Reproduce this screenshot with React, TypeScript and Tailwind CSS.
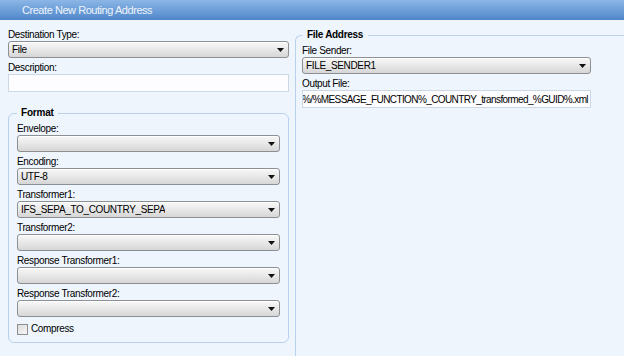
import React from 'react'

const FONT = "font-['Liberation_Sans',Arial,sans-serif]"

function Arrow() {
  return (
    <svg width="7" height="4" viewBox="0 0 7 4" className="shrink-0">
      <polygon points="0,0 7,0 3.5,4" fill="#111" />
    </svg>
  )
}

function Select({ value }: { value?: string }) {
  return (
    <div className="flex h-[17px] items-center justify-between rounded-[3px] border border-[#8c8f94] bg-gradient-to-b from-[#f8f8f8] via-[#e8e8e8] to-[#d6d6d6] pr-[4px] pl-[3px] shadow-[inset_0_1px_0_#ffffff]">
      <span className="truncate text-[10px] leading-[15px] tracking-[-0.35px] text-black">{value}</span>
      <Arrow />
    </div>
  )
}

function TextInput({ children, end }: { children?: React.ReactNode; end?: boolean }) {
  return (
    <div
      className={`flex h-[18px] items-center overflow-hidden border border-[#cdd8e6] bg-[#fdfcfe] px-[2px] ${end ? 'justify-end' : ''}`}
    >
      <span className="text-[10px] leading-[15px] tracking-[-0.6px] whitespace-nowrap text-black">{children}</span>
    </div>
  )
}

function Field({ label, children }: { label: string; children: React.ReactNode }) {
  return (
    <div className="flex flex-col">
      <label className="h-[12px] text-[10px] leading-[12px] tracking-[-0.35px] text-black">{label}</label>
      {children}
    </div>
  )
}

export default function App() {
  return (
    <div className={`flex h-[356px] w-[624px] flex-col overflow-hidden bg-[#eef5fd] ${FONT}`}>
      <div className="flex h-[20px] shrink-0 items-center bg-gradient-to-b from-[#8cb6e6] to-[#4f87ca] pl-[22px]">
        <span className="text-[11px] leading-[20px] tracking-[-0.45px] text-[#eef4fc]">Create New Routing Address</span>
      </div>

      <div className="flex flex-1 gap-[6px] pt-[9px] pl-[8px]">
        {/* left column */}
        <div className="flex w-[281px] shrink-0 flex-col">
          <div className="flex flex-col gap-[4px]">
            <Field label="Destination Type:">
              <Select value="File" />
            </Field>
            <Field label="Description:">
              <TextInput />
            </Field>
          </div>

          <fieldset className="mt-[15px] rounded-[6px] border border-[#b9d1ed] pt-[4px] pr-[8px] pb-[7px] pl-[8px]">
            <legend className="px-[4px] text-[10px] leading-[12px] font-bold tracking-[-0.2px] text-black">Format</legend>
            <div className="flex flex-col gap-[4px]">
              <Field label="Envelope:">
                <Select />
              </Field>
              <Field label="Encoding:">
                <Select value="UTF-8" />
              </Field>
              <Field label="Transformer1:">
                <Select value="IFS_SEPA_TO_COUNTRY_SEPA" />
              </Field>
              <Field label="Transformer2:">
                <Select />
              </Field>
              <Field label="Response Transformer1:">
                <Select />
              </Field>
              <Field label="Response Transformer2:">
                <Select />
              </Field>
            </div>
            <div className="mt-[6px] flex items-center gap-[3px]">
              <div className="h-[11px] w-[11px] border border-[#8e8e8e] bg-gradient-to-br from-[#dcdcdc] to-[#f8f8f8]" />
              <span className="text-[10px] leading-[12px] tracking-[-0.35px] text-black">Compress</span>
            </div>
          </fieldset>
        </div>

        {/* right column */}
        <fieldset className="flex-1 rounded-tl-[6px] border-t border-l border-[#b9d1ed] pt-[4px] pl-[6px]">
          <legend className="px-[5px] text-[10px] leading-[12px] font-bold tracking-[-0.3px] text-black">File Address</legend>
          <div className="flex w-[289px] flex-col gap-[4px]">
            <Field label="File Sender:">
              <Select value="FILE_SENDER1" />
            </Field>
            <Field label="Output File:">
              <TextInput end>T%/%MESSAGE_FUNCTION%_COUNTRY_transformed_%GUID%.xml</TextInput>
            </Field>
          </div>
        </fieldset>
      </div>
    </div>
  )
}
